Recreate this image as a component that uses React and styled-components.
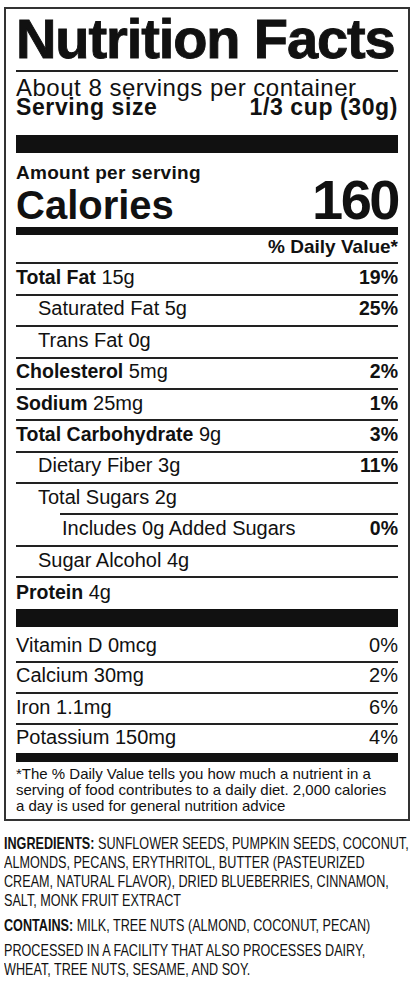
import styled, { createGlobalStyle } from "styled-components";

const GlobalStyle = createGlobalStyle`
  * {
    box-sizing: border-box;
  }
  html,
  body {
    overflow-x: hidden;
  }
  body {
    margin: 0;
    background: #fff;
    color: #111;
    font-family: "Liberation Sans", Arial, sans-serif;
  }
`;

const Page = styled.div`
  padding: 7px 6px 0 4px;
`;

const Panel = styled.section`
  border: 2px solid #333;
  padding: 0 10px 4.4px;
`;

const Title = styled.h1`
  margin: 1.6px 0 0;
  font-size: 56px;
  line-height: 56px;
  font-weight: 700;
  letter-spacing: -1.1px;
  white-space: nowrap;
  -webkit-text-stroke: 0.9px #111;
`;

const Bar = styled.div`
  height: ${(p) => p.$h}px;
  margin-top: ${(p) => p.$mt || 0}px;
  background: ${(p) => (p.$h > 3 ? "#111" : "#222")};
`;

const Servings = styled.div`
  margin-top: 5.7px;
  font-size: 24px;
  line-height: 20px;
  letter-spacing: 0.5px;
`;

const ServingSize = styled.div`
  display: flex;
  justify-content: space-between;
  margin-top: 0;
  font-size: 23px;
  line-height: 19px;
  font-weight: 700;
  letter-spacing: 0.6px;
`;

const AmountLabel = styled.div`
  margin-top: 9.7px;
  font-size: 19px;
  line-height: 19px;
  font-weight: 700;
  letter-spacing: 0.3px;
`;

const CaloriesRow = styled.div`
  display: flex;
  justify-content: space-between;
  align-items: baseline;
  margin-top: -2px;
  font-weight: 700;
`;

const CaloriesLabel = styled.span`
  font-size: 40px;
  line-height: 40px;
`;

const CaloriesValue = styled.span`
  font-size: 56px;
  line-height: 40px;
  letter-spacing: -2.5px;
`;

const DailyHeader = styled.div`
  margin: 2.4px 0 6.1px;
  text-align: right;
  font-size: 19px;
  line-height: 19px;
  font-weight: 700;
`;

const Row = styled.div`
  display: flex;
  justify-content: space-between;
  align-items: center;
  height: ${(p) => p.$h || 31.4}px;
  margin-left: ${(p) => p.$inset || 0}px;
  padding: ${(p) => p.$pt || 0}px 0 ${(p) => (p.$pb ?? 4)}px
    ${(p) => p.$indent || 0}px;
  border-top: ${(p) => (p.$noLine ? "none" : "2px solid #222")};
  font-size: 20px;
  line-height: 20px;
  white-space: nowrap;
`;

const Name = styled.b`
  font-size: 19.5px;
  font-weight: 700;
`;

const Percent = styled.span`
  font-weight: ${(p) => (p.$light ? 400 : 700)};
  font-size: ${(p) => (p.$light ? 20 : 19.5)}px;
`;

const Footnote = styled.p`
  margin: 3.7px 0 0;
  max-width: 378px;
  font-size: 15px;
  line-height: 16.3px;
`;

/* condensed face is not installed: narrow the regular one */
const Ingredients = styled.div`
  width: 533px;
  margin-top: 13px;
  transform: scaleX(0.765);
  transform-origin: left top;
  font-size: 16.5px;
  line-height: 19px;
  text-transform: uppercase;
`;

const Para = styled.p`
  margin: 0 0 6px;
`;

const nutrients = [
  { name: "Total Fat", amount: "15g", dv: "19%" },
  { amount: "Saturated Fat 5g", dv: "25%", indent: 22 },
  { amount: "Trans Fat 0g", indent: 22 },
  { name: "Cholesterol", amount: "5mg", dv: "2%" },
  { name: "Sodium", amount: "25mg", dv: "1%" },
  { name: "Total Carbohydrate", amount: "9g", dv: "3%" },
  { amount: "Dietary Fiber 3g", dv: "11%", indent: 22 },
  { amount: "Total Sugars 2g", indent: 22 },
  { amount: "Includes 0g Added Sugars", dv: "0%", inset: 44, indent: 2 },
  { amount: "Sugar Alcohol 4g", indent: 22 },
  { name: "Protein", amount: "4g", h: 33 },
];

const vitamins = [
  { label: "Vitamin D 0mcg", dv: "0%", first: true },
  { label: "Calcium 30mg", dv: "2%" },
  { label: "Iron 1.1mg", dv: "6%" },
  { label: "Potassium 150mg", dv: "4%", h: 29.5 },
];

export default function App() {
  return (
    <Page>
      <GlobalStyle />
      <Panel>
        <Title>Nutrition Facts</Title>
        <Bar $h={2} $mt={3.4} />
        <Servings>About 8 servings per container</Servings>
        <ServingSize>
          <span>Serving size</span>
          <span>1/3 cup (30g)</span>
        </ServingSize>
        <Bar $h={18} $mt={18.3} />

        <AmountLabel>Amount per serving</AmountLabel>
        <CaloriesRow>
          <CaloriesLabel>Calories</CaloriesLabel>
          <CaloriesValue>160</CaloriesValue>
        </CaloriesRow>
        <Bar $h={8} $mt={2.2} />
        <DailyHeader>% Daily Value*</DailyHeader>

        {nutrients.map((n) => (
          <Row
            key={n.amount}
            $indent={n.indent}
            $inset={n.inset}
            $h={n.h}
          >
            <span>
              {n.name && <Name>{n.name}</Name>}
              {n.name ? " " : ""}
              {n.amount}
            </span>
            {n.dv && <Percent>{n.dv}</Percent>}
          </Row>
        ))}

        <Bar $h={18} />
        {vitamins.map((v) => (
          <Row
            key={v.label}
            $noLine={v.first}
            $h={v.first ? 33.4 : v.h}
            $pt={v.first ? 1.5 : 0}
            $pb={v.first ? 0 : 4}
          >
            <span>{v.label}</span>
            <Percent $light>{v.dv}</Percent>
          </Row>
        ))}
        <Bar $h={9} />

        <Footnote>
          *The % Daily Value tells you how much a nutrient in a serving of
          food contributes to a daily diet. 2,000 calories a day is used for
          general nutrition advice
        </Footnote>
      </Panel>

      <Ingredients>
        <Para>
          <b>Ingredients:</b> Sunflower seeds, pumpkin seeds, coconut, almonds,
          pecans, erythritol, butter (pasteurized cream, natural flavor), dried
          blueberries, cinnamon, salt, monk fruit extract
        </Para>
        <Para>
          <b>Contains:</b> milk, tree nuts (almond, coconut, pecan)
        </Para>
        <Para>
          Processed in a facility that also processes dairy, wheat, tree nuts,
          sesame, and soy.
        </Para>
      </Ingredients>
    </Page>
  );
}
